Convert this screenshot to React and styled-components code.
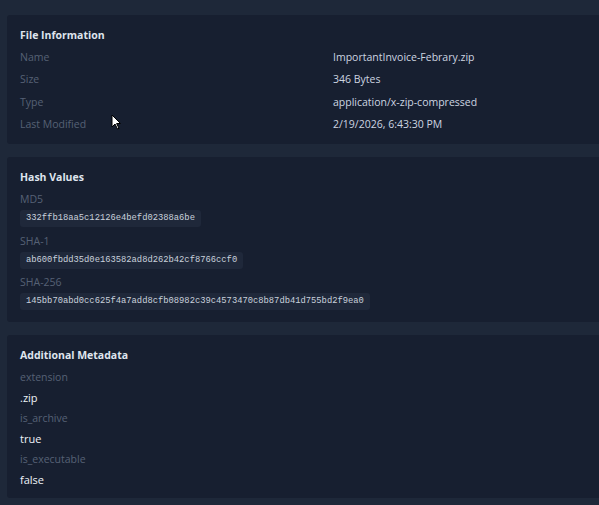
import React from 'react';
import styled, { createGlobalStyle } from 'styled-components';

const GlobalStyle = createGlobalStyle`
  html, body {
    margin: 0;
    padding: 0;
    background: #1e2839;
    overflow: hidden;
  }
  body {
    font-family: "Open Sans", "Noto Sans", sans-serif;
  }
`;

const Page = styled.div`
  position: relative;
  box-sizing: border-box;
  width: 599px;
  padding: 15px 0 0 7px;
  display: flex;
  flex-direction: column;
  gap: 13px;
`;

/* cards run on past the right edge of the window, so no right corners */
const Card = styled.section`
  background: #171f30;
  border-radius: 3px 0 0 3px;
  padding: 9px 13px;
`;

const Title = styled.h3`
  margin: 0;
  font-size: 10.5px;
  font-weight: 700;
  line-height: 22px;
  color: #dfe5ee;
`;

const InfoGrid = styled.div`
  display: grid;
  grid-template-columns: 313px 1fr;
  line-height: 22.3px;
  font-size: 10.5px;
`;

const Label = styled.div`
  color: #566175;
  font-size: 10.5px;
  line-height: ${(p) => p.$lh || '22.3px'};
`;

const Value = styled.div`
  color: ${(p) => (p.$bright ? '#eef2f7' : '#cdd5e0')};
  font-size: ${(p) => (p.$bright ? '11px' : '10.5px')};
  line-height: ${(p) => p.$lh || '22.3px'};
`;

const HashItem = styled.div`
  display: flex;
  flex-direction: column;
  align-items: flex-start;
`;

const HashBox = styled.code`
  display: inline-block;
  height: 17px;
  line-height: 17px;
  padding: 0 6px;
  margin-bottom: 2.5px;
  background: #1f283a;
  border-radius: 3px;
  color: #c9d1dc;
  font-family: "Liberation Mono", "DejaVu Sans Mono", monospace;
  font-size: 8.8px;
`;

const Cursor = styled.svg`
  position: absolute;
  left: 111px;
  top: 114px;
  pointer-events: none;
`;

const fileInfo = [
  ['Name', 'ImportantInvoice-Febrary.zip'],
  ['Size', '346 Bytes'],
  ['Type', 'application/x-zip-compressed'],
  ['Last Modified', '2/19/2026, 6:43:30 PM'],
];

const hashes = [
  ['MD5', '332ffb18aa5c12126e4befd02388a6be'],
  ['SHA-1', 'ab600fbdd35d0e163582ad8d262b42cf8766ccf0'],
  ['SHA-256', '145bb70abd0cc625f4a7add8cfb08982c39c4573470c8b87db41d755bd2f9ea0'],
];

const metadata = [
  ['extension', '.zip'],
  ['is_archive', 'true'],
  ['is_executable', 'false'],
];

const App = () => {
  return (
    <Page>
      <GlobalStyle />
      <Card>
        <Title>File Information</Title>
        <InfoGrid>
          {fileInfo.map(([k, v]) => (
            <React.Fragment key={k}>
              <Label>{k}</Label>
              <Value>{v}</Value>
            </React.Fragment>
          ))}
        </InfoGrid>
      </Card>

      <Card>
        <Title>Hash Values</Title>
        {hashes.map(([k, v]) => (
          <HashItem key={k}>
            <Label $lh="22px">{k}</Label>
            <HashBox>{v}</HashBox>
          </HashItem>
        ))}
      </Card>

      <Card>
        <Title>Additional Metadata</Title>
        {metadata.map(([k, v]) => (
          <div key={k}>
            <Label $lh="22px">{k}</Label>
            <Value $bright $lh="19px">{v}</Value>
          </div>
        ))}
      </Card>

      <Cursor width="11" height="16" viewBox="0 0 11 16">
        <path d="M1 1 L1 13 L4 10 L6.5 15 L8 14.3 L5.6 9.5 L9.5 9.5 Z" fill="#fff" stroke="#000" strokeWidth="1" />
      </Cursor>
    </Page>
  );
};

export default React.memo(App);
